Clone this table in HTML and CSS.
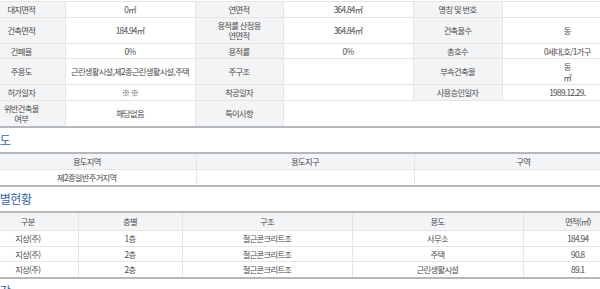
FILE: index.html
```html
<!DOCTYPE html>
<html lang="ko">
<head>
<meta charset="utf-8">
<title>건축물대장</title>
<link rel="stylesheet" href="styles.css">
</head>
<body>
<div class="page">
  <table class="grid info">
    <colgroup>
      <col class="c-lab1"><col class="c-val"><col class="c-lab2"><col class="c-val"><col class="c-lab3"><col class="c-val">
    </colgroup>
    <tbody>
      <tr>
        <th>대지면적</th><td>0㎡</td>
        <th>연면적</th><td>364.84㎡</td>
        <th>명칭 및 번호</th><td></td>
      </tr>
      <tr>
        <th>건축면적</th><td>184.94㎡</td>
        <th>용적률 산정용<br>연면적</th><td>364.84㎡</td>
        <th>건축물수</th><td>동</td>
      </tr>
      <tr>
        <th>건폐율</th><td>0%</td>
        <th>용적률</th><td>0%</td>
        <th>총호수</th><td>0세대,호/1가구</td>
      </tr>
      <tr>
        <th>주용도</th><td>근린생활시설,제2종근린생활시설,주택</td>
        <th>주구조</th><td></td>
        <th>부속건축물</th><td>동<br>㎡</td>
      </tr>
      <tr>
        <th>허가일자</th><td class="muted">※ ※</td>
        <th>착공일자</th><td></td>
        <th>사용승인일자</th><td>1989.12.29.</td>
      </tr>
      <tr>
        <th>위반건축물<br>여부</th><td>해당없음</td>
        <th>특이사항</th><td colspan="3"></td>
      </tr>
    </tbody>
  </table>

  <h2 class="sec-title">용도</h2>
  <table class="grid list zone">
    <thead>
      <tr><th>용도지역</th><th>용도지구</th><th>구역</th></tr>
    </thead>
    <tbody>
      <tr><td>제2종일반주거지역</td><td></td><td></td></tr>
    </tbody>
  </table>

  <h2 class="sec-title">층별현황</h2>
  <table class="grid list floors">
    <colgroup>
      <col class="f1"><col class="f2"><col class="f3"><col class="f4"><col class="f5">
    </colgroup>
    <thead>
      <tr><th>구분</th><th>층별</th><th>구조</th><th>용도</th><th>면적(㎡)</th></tr>
    </thead>
    <tbody>
      <tr><td>지상(주)</td><td>1층</td><td>철근콘크리트조</td><td>사무소</td><td>184.94</td></tr>
      <tr><td>지상(주)</td><td>2층</td><td>철근콘크리트조</td><td>주택</td><td>90.8</td></tr>
      <tr><td>지상(주)</td><td>2층</td><td>철근콘크리트조</td><td>근린생활시설</td><td>89.1</td></tr>
    </tbody>
  </table>

  <h2 class="sec-title">인감</h2>
</div>
</body>
</html>
```

FILE: styles.css
```css
html {
  overflow: hidden;
  background: #fff;
}

body {
  margin: 0;
  font-family: "Noto Sans CJK KR", "Noto Sans", sans-serif;
  color: #4a4a4a;
}

.page {
  width: 654px;
  margin-left: -22px;
  padding-top: 1px;
}

.grid {
  width: 654px;
  border-collapse: collapse;
  table-layout: fixed;
  font-size: 8.3px;
  letter-spacing: -0.7px;
  line-height: 10.5px;
}

.grid th,
.grid td {
  padding: 2.5px 2px;
  text-align: center;
  font-weight: normal;
  border: 1px solid #e3e5e9;
  color: #4a4a4a;
  white-space: nowrap;
}

.info {
  border-top: 1px solid #e3e5e9;
  border-bottom: 2px solid #b4b7bc;
}

.info th,
.info td {
  padding: 2px 2px;
}

.info th {
  background: #f3f4f6;
}

.c-lab1 { width: 87px; }
.c-lab2 { width: 88px; }
.c-lab3 { width: 89px; }
.c-val { width: 130px; }

.muted {
  color: #aaa;
}

.sec-title {
  margin: 0;
  height: 24px;
  padding-left: 11px;
  font-size: 12px;
  line-height: 24px;
  letter-spacing: -0.4px;
  font-weight: normal;
  color: #3565aa;
}

.list {
  border-top: 2px solid #b4b7bc;
  border-bottom: 2px solid #b4b7bc;
}

.list thead th {
  background: #f3f4f6;
}

.list td {
  padding-top: 2px;
  padding-bottom: 2px;
}

.grid th:first-child,
.grid td:first-child {
  border-left: none;
}

.grid th:last-child,
.grid td:last-child {
  border-right: none;
}

.floors thead th {
  padding-top: 3.5px;
  padding-bottom: 3.5px;
}

.f1 { width: 100px; }
.f2 { width: 104px; }
.f3 { width: 170px; }
.f4 { width: 171px; }
.f5 { width: 109px; }
```
